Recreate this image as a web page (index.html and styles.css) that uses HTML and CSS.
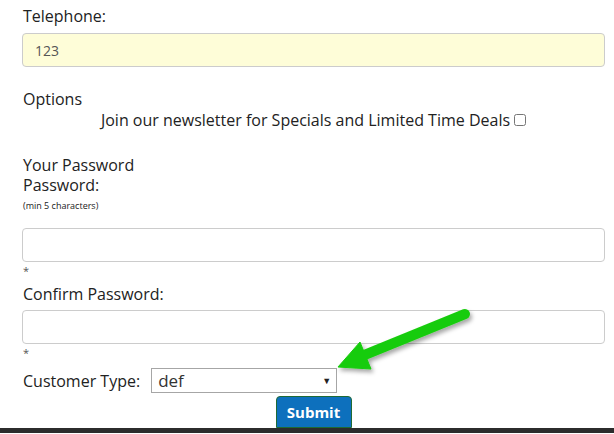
FILE: index.html
```html
<!DOCTYPE html>
<html lang="en">
<head>
  <meta charset="UTF-8" />
  <title>Account Details</title>
  <meta name="viewport" content="width=device-width, initial-scale=1.0" />
  <link rel="stylesheet" href="styles.css">
</head>
<body>

  <form class="signup" onsubmit="return false;">
    <label class="field-label" for="phone">Telephone:</label>
    <input class="text-input phone" type="text" id="phone" value="123">

    <div class="section-title options-title">Options</div>
    <div class="newsletter">
      <label for="news">Join our newsletter for Specials and Limited Time Deals</label>
      <input type="checkbox" id="news" class="check">
    </div>

    <div class="section-title password-title">Your Password</div>
    <label class="field-label" for="pass">Password:</label>
    <div class="hint">(min 5 characters)</div>
    <input class="text-input pass" type="password" id="pass">
    <div class="required">*</div>

    <label class="field-label confirm-label" for="pass2">Confirm Password:</label>
    <input class="text-input confirm" type="password" id="pass2">
    <div class="required">*</div>

    <div class="type-row">
      <label for="ctype">Customer Type:</label>
      <div class="select-wrap">
        <select id="ctype">
          <option>def</option>
          <option>abc</option>
        </select>
      </div>
    </div>

    <div class="actions">
      <button type="submit" class="submit">Submit</button>
    </div>
  </form>

  <div class="bottom-bar"></div>

  <!-- annotation arrow pointing at the select -->
  <svg class="arrow" width="150" height="80" viewBox="330 300 150 80">
    <defs>
      <filter id="shadow" x="-20%" y="-20%" width="150%" height="160%">
        <feDropShadow dx="2" dy="3" stdDeviation="2" flood-color="#000" flood-opacity="0.35"/>
      </filter>
    </defs>
    <g filter="url(#shadow)" fill="#18cc0b" stroke="#18cc0b">
      <line x1="465" y1="314" x2="362" y2="356" stroke-width="10" stroke-linecap="round"/>
      <polygon points="338,367 360,342 371,369" stroke-width="1" stroke-linejoin="round"/>
    </g>
  </svg>

</body>
</html>
```

FILE: styles.css
```css
body {
  margin: 0;
  font-family: "Open Sans", Arial, sans-serif;
  color: #222;
  background: #fff;
}
.signup {
  padding: 6px 9px 0 22px;
  display: flex;
  flex-direction: column;
}
.field-label, .section-title {
  display: block;
  font-size: 16px;
  line-height: 20px;
  padding-left: 1px;
}
.text-input {
  box-sizing: border-box;
  width: 100%;
  height: 34px;
  border: 1px solid #ccc;
  border-radius: 4px;
  padding: 0 12px;
  font-family: inherit;
  font-size: 14px;
  color: #555;
  background: #fff;
}
.phone {
  margin-top: 7px;
  background: #fefdd8;
}
.options-title {
  margin-top: 22px;
}
.newsletter {
  display: flex;
  justify-content: center;
  align-items: center;
  gap: 4px;
  font-size: 16px;
  line-height: 20px;
  margin-top: 1px;
}
.check {
  margin: 0;
  width: 12px;
  height: 12px;
}
.password-title {
  margin-top: 25px;
}
.hint {
  font-size: 9px;
  line-height: 12px;
  margin-top: 5px;
  padding-left: 1px;
}
.pass {
  margin-top: 16px;
}
.required {
  font-size: 11px;
  line-height: 14px;
  color: #555;
  padding-left: 1px;
  margin-top: 2px;
}
.confirm-label {
  margin-top: 6px;
}
.confirm {
  margin-top: 6px;
}
.type-row {
  display: flex;
  align-items: center;
  gap: 11px;
  font-size: 16px;
  margin-top: 8px;
  padding-left: 1px;
}
.select-wrap {
  position: relative;
}
.select-wrap select {
  appearance: none;
  -webkit-appearance: none;
  box-sizing: border-box;
  width: 186px;
  height: 25px;
  border: 1px solid #a6a6a6;
  border-radius: 0;
  background: #fff;
  padding: 0 6px;
  font-family: inherit;
  font-size: 17px;
  color: #333;
}
.select-wrap::after {
  content: "\25BC";
  position: absolute;
  right: 6px;
  top: 6px;
  font-size: 9px;
  color: #222;
  pointer-events: none;
}
.actions {
  display: flex;
  justify-content: center;
  margin-top: 3px;
}
.submit {
  width: 76px;
  height: 32px;
  background: #0d70bd;
  color: #fff;
  border: 1px solid #1f6a35;
  border-radius: 4px 4px 0 0;
  font-family: inherit;
  font-weight: bold;
  font-size: 15px;
}
.bottom-bar {
  height: 5px;
  background: #2c2c2c;
}
.arrow {
  position: absolute;
  left: 330px;
  top: 300px;
}
```
